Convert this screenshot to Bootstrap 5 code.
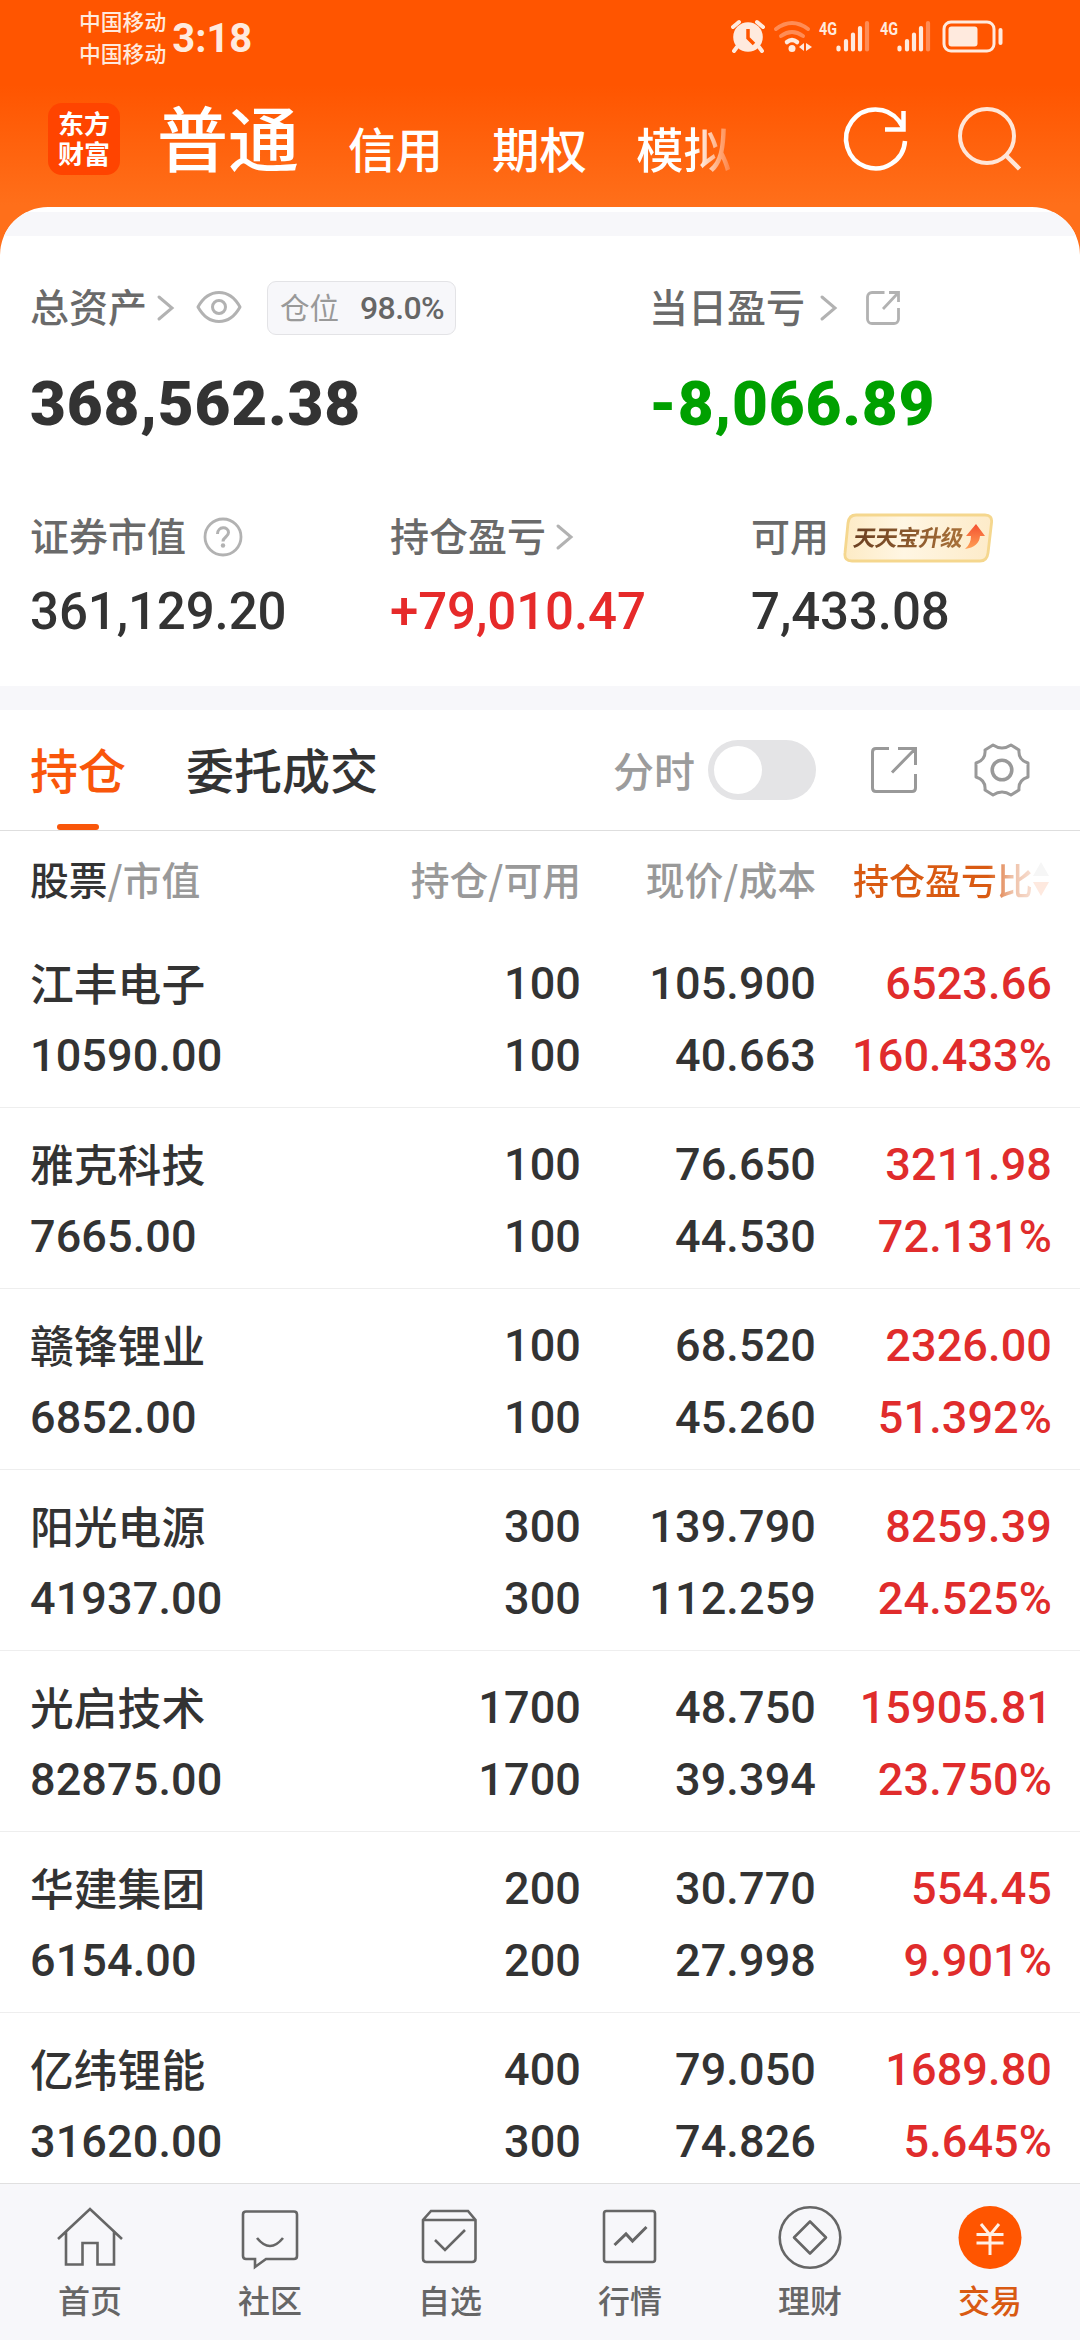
<!DOCTYPE html>
<html lang="zh-CN">
<head>
<meta charset="utf-8">
<meta name="viewport" content="width=device-width, initial-scale=1">
<title>交易 - 持仓</title>
<link href="https://cdn.jsdelivr.net/npm/bootstrap@5.3.0/dist/css/bootstrap.min.css" rel="stylesheet">
<style>
  body{font-family:Roboto,"Noto Sans CJK SC",sans-serif;color:#333;background:#fff;width:1080px;height:2340px;overflow:hidden;line-height:1}
  svg{display:block;flex:none;fill:none}
  .cjk{font-family:"Noto Sans CJK SC",sans-serif}
  .hero{height:255px;background:linear-gradient(#f50 0,#f50 85px,#ff6f1a 205px)}
  .statusbar{height:80px;padding:4px 73px 0 79px}
  .carrier{font-size:21.8px;line-height:32px;color:#ffeade;font-weight:500;margin-top:1px}
  .clock{font-size:40px;line-height:69px;font-weight:700;color:#ffeade;margin-left:6px}
  .topnav{height:120px;padding-left:48px}
  .applogo{width:72px;height:72px;border-radius:14px;background:#ff4400;color:#fff;font-size:26px;line-height:30px;font-weight:700;margin-top:23px;padding-top:5px}
  .acct{color:#fff;font-size:47.5px;font-weight:500;line-height:60px;white-space:nowrap;margin:38px 0 0 49px}
  .acct.main{font-size:71px;line-height:84px;margin:13px 0 0 37px}
  .fade-out{background:linear-gradient(90deg,#fff 62%,#ffa97a 88%,#ff8040);-webkit-background-clip:text;background-clip:text;color:transparent}
  .sheet{margin-top:-48px;border-radius:48px 48px 0 0;background:#fff;overflow:hidden;padding-top:5px}
  .band{height:24px;background:#f7f7fa}
  .summary{height:450px;padding:45px 0 0 30px}
  .lbl{font-size:39px;font-weight:500;color:#6a6a6a;line-height:49px;padding-bottom:5px;white-space:nowrap}
  .h54{height:54px}
  .holdrate{width:189px;height:54px;border:1px solid #e3e3e6;border-radius:9px;background:#f7f7fa;font-size:29.5px;color:#999;padding:0 11px 0 12px}
  .holdrate .cjk{line-height:48px;padding-bottom:4px}
  .holdrate b{font-weight:500;color:#666;font-size:32px;letter-spacing:-.6px}
  .big{font-weight:900;font-size:62px;line-height:70px;margin-top:34px;letter-spacing:.8px}
  .mid{font-weight:500;font-size:51px;line-height:60px;margin-top:18px;letter-spacing:-.1px}
  .up{color:#e62a2a}.down{color:#00a000}
  .lower{margin-top:71px}
  .promo{width:150px;height:48px}
  .promo span{transform:skewX(-10deg);font-size:22.5px;font-weight:700;background:linear-gradient(90deg,#6b4021,#a87038);-webkit-background-clip:text;background-clip:text;color:transparent;letter-spacing:-.7px;line-height:30px;left:11px;top:8px;white-space:nowrap}
  .tabbar{height:121px;border-bottom:1px solid #dedede;padding-left:30px}
  .tabitem{font-size:48px;font-weight:500;line-height:116px;padding-bottom:4px;position:relative}
  .tabitem.on{color:#f9560a}
  .tabitem.on::after{content:"";position:absolute;left:27px;bottom:0;width:42px;height:6px;border-radius:3px;background:#f9560a}
  .switch{width:108px;height:60px;border-radius:30px;background:#e4e4e6;padding:6px}
  .switch i{display:block;width:48px;height:48px;border-radius:50%;background:#fff}
  .thead{height:96px;padding:0 31px 0 30px;color:#999;font-size:38.8px;line-height:94px}
  .c1{width:301px;flex:none}.c2{width:250px;flex:none;text-align:right}.c3{width:235px;flex:none;text-align:right}.c4{width:235px;flex:none;text-align:right}
  .sortcol{font-size:36px;font-weight:500;margin-left:37px;background:linear-gradient(90deg,#d95a12 75%,#eebfa5 88%,#f8e0d4);-webkit-background-clip:text;background-clip:text;color:transparent}
  .pos{height:181px;border-bottom:1px solid #eee;padding:21px 29px 0 30px;font-size:45px;font-weight:500;line-height:72px;letter-spacing:.1px}
  .pos .nm{font-size:43.8px;letter-spacing:0;line-height:68px;padding-bottom:4px}
  .pos .c1,.pos .c2,.pos .c3,.pos .c4{white-space:nowrap}
  .pos .c4{color:#e02c2c;width:236px}
  .rows{height:1256px;overflow:hidden}
  .bottom{height:157px;background:#f7f7fa;border-top:1px solid #e0e0e0;padding-top:19px;font-size:32px;font-weight:500;color:#666}
  .bottom svg{width:68px;height:68px;stroke:#666;stroke-width:2.6;margin:0 auto}
  .bottom div div{line-height:46px;margin-top:5px}
  .bottom .active{color:#d95a12}
</style>
</head>
<body>
<header class="hero">
  <div class="statusbar d-flex">
    <div class="carrier cjk">中国移动<br>中国移动</div>
    <div class="clock">3:18</div>
    <svg class="ms-auto" width="276" height="60" viewBox="730 4 276 60" stroke="#ffeade">
      <circle cx="747" cy="37" r="14.8" fill="#ffeade" stroke="none"/>
      <path d="M747 29v9l6 6" stroke="#f50" stroke-width="3.5"/>
      <path d="M732 27l6-5M762 27l-6-5M736 47l-3 4M758 47l3 4" stroke-width="4" stroke-linecap="round"/>
      <path d="M775 29q16-12 32 0M780 36q11-8 22 0" stroke="#ff8c55" stroke-width="4" stroke-linecap="round"/>
      <path d="M786 42q5-4 10 0" stroke-width="4.5" stroke-linecap="round"/>
      <circle cx="791" cy="48.500" r="3.500" fill="#ffeade" stroke="none"/>
      <path d="M803 43v8l-5-4zM805 43v8l6-4z" fill="#ffeade" stroke="none"/>
      <g id="sig"><text x="818" y="34.500" font-size="19" font-weight="700" textLength="18" lengthAdjust="spacingAndGlyphs" fill="#ffeade" stroke="none">4G</text>
      <path d="M837.500 47.500v2M845 41v8.500M852 34.500v15M859 28v21.500" stroke-width="4.200" stroke-linecap="round"/><path d="M866 23v26.500" stroke="#ff8c55" stroke-width="4.200" stroke-linecap="round"/></g>
      <use href="#sig" x="61"/>
      <rect x="943" y="22" width="50" height="29" rx="7" stroke-width="3"/>
      <rect x="947.500" y="26.500" width="29" height="20" rx="3" fill="#ffeade" stroke="none"/>
      <path d="M999.500 30v13" stroke-width="4" stroke-linecap="round"/>
    </svg>
  </div>
  <div class="topnav d-flex">
    <div class="applogo cjk text-center">东方<br>财富</div>
    <div class="acct main cjk">普通</div>
    <div class="acct cjk">信用</div>
    <div class="acct cjk">期权</div>
    <div class="acct cjk fade-out">模拟</div>
    <svg class="ms-auto" width="240" height="90" viewBox="840 90 240 90" style="margin-top:10px">
      <path d="M905 141a29.500 29.500 0 1 1-6-20l4.500 7M903.500 111v18.500h-18.500" stroke="#fff" stroke-width="4.500"/>
      <circle cx="987" cy="136" r="27" stroke="#ffe6d8" stroke-width="4"/><path d="M1005.500 155l14 14" stroke="#ffe6d8" stroke-width="4.500"/>
    </svg>
  </div>
</header>

<main class="sheet">
  <div class="band"></div>
  <section class="summary">
    <div class="d-flex">
      <div style="width:619px">
        <div class="d-flex align-items-center h54">
          <span class="lbl cjk">总资产</span>
          <svg width="20" height="28" viewBox="0 0 20 28" stroke="#b2b2b2" stroke-width="3" stroke-linecap="round" style="margin-left:8px"><path d="M4 3l13 11L4 25"/></svg>
          <svg width="46" height="34" viewBox="0 0 46 34" stroke="#b2b2b2" stroke-width="3" stroke-linejoin="round" style="margin-left:21px;margin-top:-3px"><path d="M2 17Q10 2.500 23 2.500T44 17Q36 31.500 23 31.500T2 17z"/><circle cx="23" cy="17" r="6.500"/></svg>
          <div class="holdrate d-flex align-items-center justify-content-between" style="margin-left:25px"><span class="cjk">仓位</span><b>98.0%</b></div>
        </div>
        <div class="big">368,562.38</div>
      </div>
      <div>
        <div class="d-flex align-items-center h54">
          <span class="lbl cjk">当日盈亏</span>
          <svg width="20" height="28" viewBox="0 0 20 28" stroke="#b2b2b2" stroke-width="3" stroke-linecap="round" style="margin-left:13px"><path d="M4 3l13 11L4 25"/></svg>
          <svg width="36" height="36" viewBox="0 0 36 36" stroke="#b2b2b2" stroke-width="2.800" style="margin-left:27px"><path d="M19.500 2.500H7a4.500 4.500 0 0 0-4.500 4.500v22A4.500 4.500 0 0 0 7 33.500h22a4.500 4.500 0 0 0 4.500-4.500V18M24 2.500h9.500V12M33 3L18 19"/></svg>
        </div>
        <div class="big down">-8,066.89</div>
      </div>
    </div>
    <div class="d-flex lower">
      <div style="width:360px">
        <div class="d-flex align-items-center h54"><span class="lbl cjk">证券市值</span>
          <svg width="40" height="40" viewBox="0 0 40 40" stroke="#b2b2b2" stroke-width="2.800" style="margin-left:17px"><circle cx="20" cy="20" r="18"/><path d="M14.500 17c0-8 11-8 11-1.500 0 4.500-5.500 4.500-5.500 9" stroke-width="3"/><circle cx="20" cy="28.500" r="2.200" fill="#b2b2b2" stroke="none"/></svg></div>
        <div class="mid">361,129.20</div>
      </div>
      <div style="width:361px">
        <div class="d-flex align-items-center h54"><span class="lbl cjk">持仓盈亏</span>
          <svg width="20" height="28" viewBox="0 0 20 28" stroke="#b2b2b2" stroke-width="3" stroke-linecap="round" style="margin-left:8px"><path d="M4 3l13 11L4 25"/></svg></div>
        <div class="mid up">+79,010.47</div>
      </div>
      <div>
        <div class="d-flex align-items-center h54"><span class="lbl cjk">可用</span>
          <div class="promo position-relative" style="margin-left:14px">
            <svg width="150" height="50" viewBox="0 0 150 50"><defs><linearGradient id="gold"><stop stop-color="#fdebc5"/><stop offset=".4" stop-color="#fff6e3"/><stop offset="1" stop-color="#fdebc9"/></linearGradient><linearGradient id="arr" x2="0" y2="1"><stop stop-color="#f4502f"/><stop offset="1" stop-color="#ffa056"/></linearGradient></defs>
            <path d="M13 2H142Q149.500 2 148.500 10L145 40Q144 48 137 48H9Q1 48 2 40L5 10Q6 2 13 2z" fill="url(#gold)" stroke="#f5d78e" stroke-width="2.800"/>
            <path d="M133 11l9 12h-5q-1 11-15 13 6-5 6-13h-5z" fill="url(#arr)"/></svg>
            <span class="cjk position-absolute">天天宝升级</span>
          </div></div>
        <div class="mid">7,433.08</div>
      </div>
    </div>
  </section>
  <div class="band"></div>

  <div class="tabbar d-flex align-items-center">
    <div class="tabitem on cjk">持仓</div>
    <div class="tabitem cjk" style="margin-left:60px">委托成交</div>
    <div class="cjk ms-auto" style="font-size:41px;font-weight:500;line-height:50px;padding-bottom:3px;color:#9c9c9c;margin-right:13px">分时</div>
    <div class="switch"><i></i></div>
    <svg width="48" height="48" viewBox="0 0 48 48" stroke="#999" stroke-width="3" style="margin-left:54px"><path d="M19 2.500H6Q2.500 2.500 2.500 6V42Q2.500 45.500 6 45.500H42Q45.500 45.500 45.500 42V28M28 2.500H45.500V19M45 3L22 26.500"/></svg>
    <svg width="56" height="56" viewBox="-28 -28 56 56" stroke="#999" stroke-width="3" stroke-linejoin="round" style="margin:0 50px 0 56px"><path d="M-9-25Q0-19 9-25L17-20Q16-10 26-7V7Q16 10 17 20L9 25Q0 19-9 25L-17 20Q-16 10-26 7V-7Q-16-10-17-20z"/><circle r="9.800" stroke-width="3.600"/></svg>
  </div>

  <div class="thead d-flex cjk fw-medium" style="font-weight:500">
    <div class="c1"><span style="color:#333">股票</span>/市值</div>
    <div class="c2">持仓/可用</div><div class="c3">现价/成本</div>
    <div class="c4 d-flex align-items-center"><span class="sortcol text-nowrap">持仓盈亏比</span>
      <svg width="16" height="36" viewBox="0 0 16 36"><path d="M8 1l8 14H0z" fill="#f6f6f6"/><path d="M8 35l8-14H0z" fill="#fee9df"/></svg></div>
  </div>

  <div class="rows">
    <div class="pos d-flex"><div class="c1"><div class="nm cjk">江丰电子</div>10590.00</div><div class="c2">100<br>100</div><div class="c3">105.900<br>40.663</div><div class="c4">6523.66<br>160.433%</div></div>
    <div class="pos d-flex"><div class="c1"><div class="nm cjk">雅克科技</div>7665.00</div><div class="c2">100<br>100</div><div class="c3">76.650<br>44.530</div><div class="c4">3211.98<br>72.131%</div></div>
    <div class="pos d-flex"><div class="c1"><div class="nm cjk">赣锋锂业</div>6852.00</div><div class="c2">100<br>100</div><div class="c3">68.520<br>45.260</div><div class="c4">2326.00<br>51.392%</div></div>
    <div class="pos d-flex"><div class="c1"><div class="nm cjk">阳光电源</div>41937.00</div><div class="c2">300<br>300</div><div class="c3">139.790<br>112.259</div><div class="c4">8259.39<br>24.525%</div></div>
    <div class="pos d-flex"><div class="c1"><div class="nm cjk">光启技术</div>82875.00</div><div class="c2">1700<br>1700</div><div class="c3">48.750<br>39.394</div><div class="c4">15905.81<br>23.750%</div></div>
    <div class="pos d-flex"><div class="c1"><div class="nm cjk">华建集团</div>6154.00</div><div class="c2">200<br>200</div><div class="c3">30.770<br>27.998</div><div class="c4">554.45<br>9.901%</div></div>
    <div class="pos d-flex"><div class="c1"><div class="nm cjk">亿纬锂能</div>31620.00</div><div class="c2">400<br>300</div><div class="c3">79.050<br>74.826</div><div class="c4">1689.80<br>5.645%</div></div>
  </div>
</main>

<nav class="bottom d-flex text-center cjk">
  <div class="col-2"><svg viewBox="0 0 68 68"><path d="M2 36L34 6l32 30M10 29v32.500h16.500V40h15v21.500H58V29"/></svg><div>首页</div></div>
  <div class="col-2"><svg viewBox="0 0 68 68"><path d="M10 8.500H58Q61 8.500 61 11.500V53Q61 56 58 56H30L19 64V56H10Q7 56 7 53V11.500Q7 8.500 10 8.500zM21 35q13 16 26 0"/></svg><div>社区</div></div>
  <div class="col-2"><svg viewBox="0 0 68 68"><path d="M15 8H52L59.500 17V55.500Q59.500 59 56 59H10.500Q7 59 7 55.500V17zM7 17H59.500M19 37l10 10 20-20"/></svg><div>自选</div></div>
  <div class="col-2"><svg viewBox="0 0 68 68"><rect x="8" y="8" width="51" height="51" rx="2.500"/><path d="M18.500 42L30 31l6.500 7 14-14" stroke-width="3"/></svg><div>行情</div></div>
  <div class="col-2"><svg viewBox="0 0 68 68"><circle cx="34" cy="34.500" r="30.300"/><path d="M34 18.500L50 34.500 34 50.500 18 34.500z" stroke-linejoin="round"/></svg><div>理财</div></div>
  <div class="col-2 active"><svg viewBox="0 0 68 68"><circle cx="34" cy="34.500" r="31.500" fill="#f50" stroke="none"/><path d="M25 21l9 11 9-11M20.500 31.500h27M20.500 40h27M34 31v21" stroke="#fff0e6" stroke-width="3"/></svg><div>交易</div></div>
</nav>
<script src="https://cdn.jsdelivr.net/npm/bootstrap@5.3.0/dist/js/bootstrap.bundle.min.js"></script>
</body>
</html>
